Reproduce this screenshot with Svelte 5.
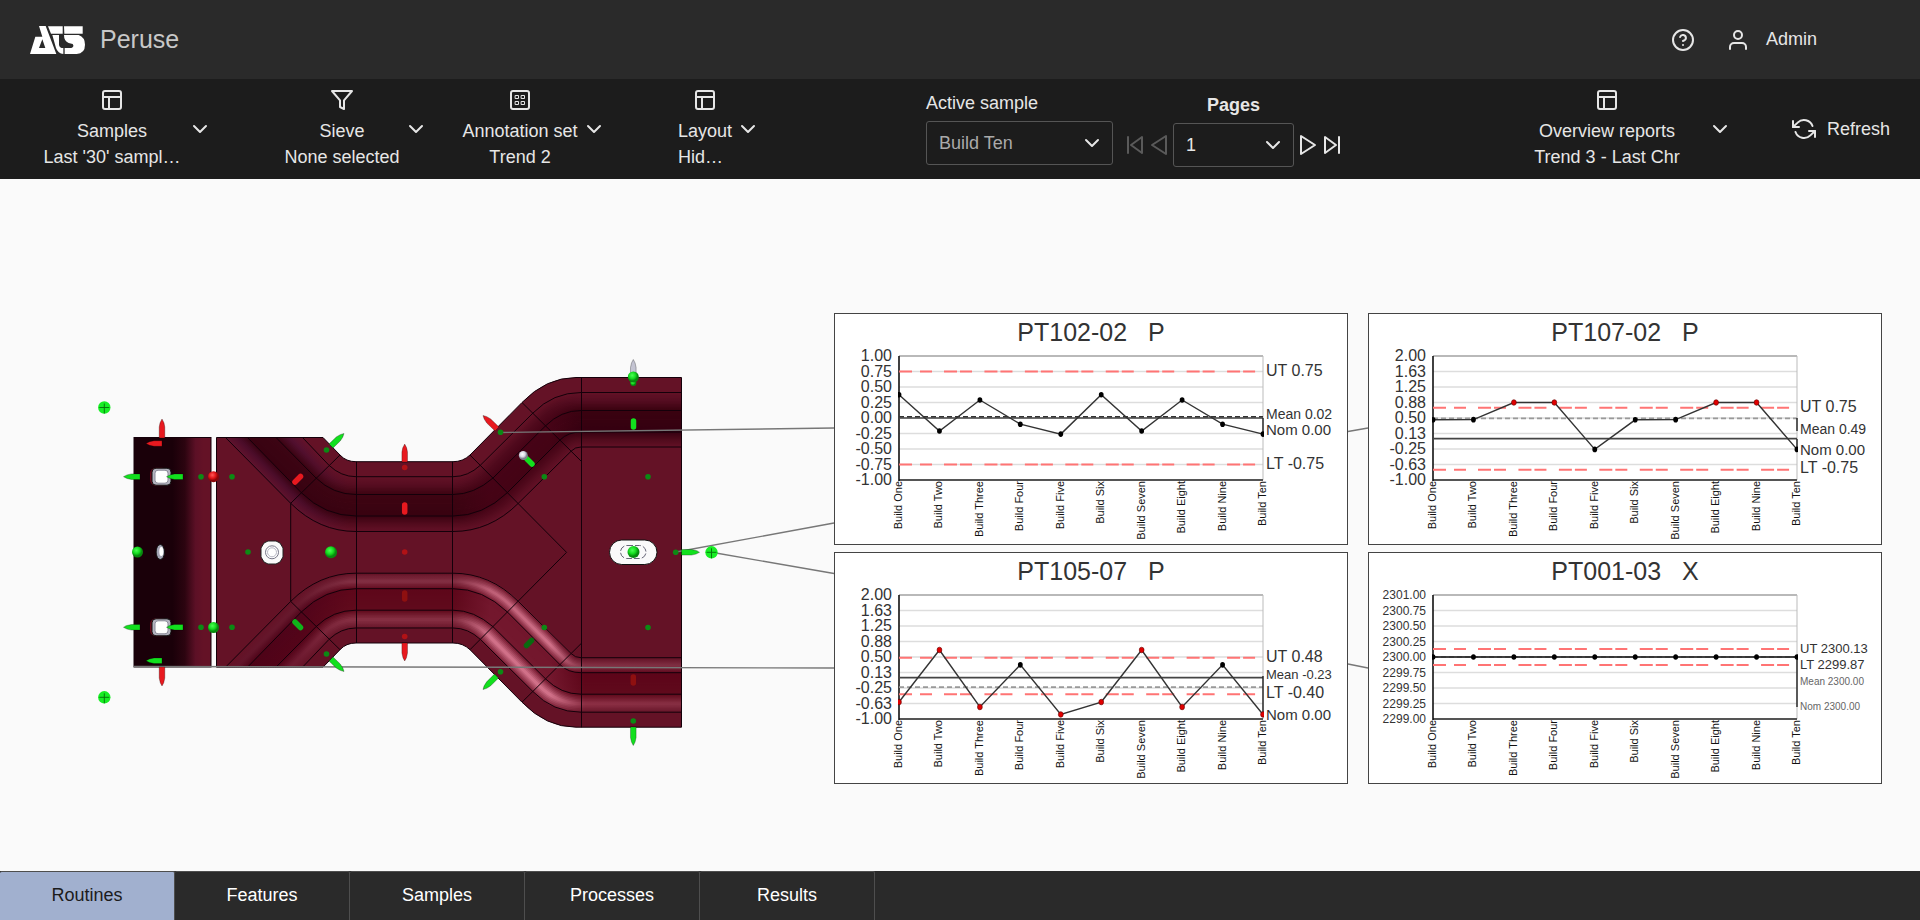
<script lang="ts">
  type Label = { text: string; y: number; size: number; soft?: boolean };
  type Chart = {
    title: string;
    axis: string;
    ticks: string[];
    tickSize: number;
    max: number;
    min: number;
    values: number[];
    ut: number;
    lt: number;
    mean: number;
    nom: number;
    meanDark?: boolean;
    drops: [number, number][];
    labels: Label[];
  };

  const builds = ['One', 'Two', 'Three', 'Four', 'Five', 'Six', 'Seven', 'Eight', 'Nine', 'Ten'];
  const tabs = ['Routines', 'Features', 'Samples', 'Processes', 'Results'];
  let activeTab = 'Routines';

  const wideTicks = ['2.00', '1.63', '1.25', '0.88', '0.50', '0.13', '-0.25', '-0.63', '-1.00'];

  const charts: Chart[] = [
    {
      title: 'PT102-02', axis: 'P', tickSize: 16, max: 1, min: -1,
      ticks: ['1.00', '0.75', '0.50', '0.25', '0.00', '-0.25', '-0.50', '-0.75', '-1.00'],
      values: [0.375, -0.21, 0.29, -0.1, -0.26, 0.375, -0.21, 0.29, -0.1, -0.26],
      ut: 0.75, lt: -0.75, mean: 0.02, nom: 0, meanDark: true,
      drops: [[104, 120]],
      labels: [
        { text: 'UT 0.75', y: 62, size: 16 },
        { text: 'Mean 0.02', y: 105, size: 14 },
        { text: 'Nom 0.00', y: 121, size: 15 },
        { text: 'LT -0.75', y: 155, size: 16 },
      ],
    },
    {
      title: 'PT107-02', axis: 'P', tickSize: 16, max: 2, min: -1,
      ticks: wideTicks,
      values: [0.456, 0.46, 0.875, 0.875, -0.26, 0.456, 0.46, 0.875, 0.875, -0.26],
      ut: 0.75, lt: -0.75, mean: 0.49, nom: 0,
      drops: [[104, 117], [125, 136]],
      labels: [
        { text: 'UT 0.75', y: 98, size: 16 },
        { text: 'Mean 0.49', y: 120, size: 14 },
        { text: 'Nom 0.00', y: 141, size: 15 },
        { text: 'LT -0.75', y: 159, size: 16 },
      ],
    },
    {
      title: 'PT105-07', axis: 'P', tickSize: 16, max: 2, min: -1,
      ticks: wideTicks,
      values: [-0.59, 0.67, -0.71, 0.31, -0.89, -0.59, 0.67, -0.71, 0.31, -0.89],
      ut: 0.48, lt: -0.4, mean: -0.23, nom: 0,
      drops: [[123, 162]],
      labels: [
        { text: 'UT 0.48', y: 109, size: 16 },
        { text: 'Mean -0.23', y: 126, size: 13 },
        { text: 'LT -0.40', y: 145, size: 16 },
        { text: 'Nom 0.00', y: 167, size: 15 },
      ],
    },
    {
      title: 'PT001-03', axis: 'X', tickSize: 12, max: 2301, min: 2299,
      ticks: ['2301.00', '2300.75', '2300.50', '2300.25', '2300.00', '2299.75', '2299.50', '2299.25', '2299.00'],
      values: Array(10).fill(2300),
      ut: 2300.13, lt: 2299.87, mean: 2300, nom: 2300, meanDark: true,
      drops: [[104, 154]],
      labels: [
        { text: 'UT 2300.13', y: 100, size: 13 },
        { text: 'LT 2299.87', y: 116, size: 13 },
        { text: 'Mean 2300.00', y: 132, size: 10, soft: true },
        { text: 'Nom 2300.00', y: 157, size: 10, soft: true },
      ],
    },
  ];

  // plot area inside each chart
  const plot = { left: 64, right: 428, top: 42, height: 124 };
  const step = (plot.right - plot.left) / 9;
  const px = (i: number) => plot.left + i * step;
  const py = (c: Chart, v: number) => plot.top + ((c.max - v) / (c.max - c.min)) * plot.height;
  const isOut = (c: Chart, v: number) => v > c.ut || v < c.lt;

  // The five edges of the pressed channel, outermost first. Every edge has the same nodes.
  const edges = [
    [323, 437.5, 340, 455, 346, 461.7, 356, 461.7, 453, 466, 461.7, 470, 455, 522, 402.5, 545, 377.5, 581, 377.5],
    [302.5, 437.5, 329, 465.3, 341, 476.7, 356, 476.7, 453, 468, 476.7, 480.3, 465.3, 533, 413, 553, 392.5, 581, 392.5],
    [276, 437.5, 316, 478, 333, 494.5, 356, 494.5, 453, 474, 494.5, 493, 478, 545.7, 425.7, 561, 410.5, 581, 410.5],
    [247.5, 437.5, 301.3, 492.7, 325, 516, 356, 516, 453, 483, 516, 507.3, 492.7, 560, 440, 568, 432, 581, 432],
    [225.5, 437.5, 290.7, 503.3, 319, 531.5, 356, 531.5, 453, 490, 531.5, 518.3, 503.3, 571.3, 451, 575, 447, 581, 447],
  ];

  function edgePath(e: number[]) {
    return `M${e[0]} ${e[1]}L${e[2]} ${e[3]}Q${e[4]} ${e[5]} ${e[6]} ${e[7]}H${e[8]}Q${e[9]} ${e[10]} ${e[11]} ${e[12]}L${e[13]} ${e[14]}Q${e[15]} ${e[16]} ${e[17]} ${e[18]}H682`;
  }

  const body =
    'M216.5 437.5H323L340 455Q346 461.7 356 461.7H453Q463 461.7 470 455L522 402.5Q546 377.5 576 377.5H681.5V727.2H576Q546 727.2 522 702.2L470 649.7Q463 643 453 643H356Q346 643 340 649.7L323 667.2H216.5Z';

  // shading keys across the channel, from the outer edge (0) to the inner edge (3)
  const keys = [0, 0.5, 1, 2, 2.5, 3];
  const stops = [235, 300, 350, 455, 490, 550, 585, 681];
  const topShade = [
    ['#641229', '#541030', '#3c0413', '#380211', '#4c0d2a', '#5e122c'],
    ['#641229', '#521030', '#3c0413', '#380211', '#4c0d2a', '#5e122c'],
    ['#641226', '#560d20', '#3e0412', '#380210', '#500a1c', '#621126'],
    ['#641226', '#560d20', '#3e0412', '#380210', '#500a1c', '#621126'],
    ['#641226', '#500a1d', '#460316', '#440315', '#520a1d', '#621126'],
    ['#641226', '#500a1d', '#460316', '#440315', '#520a1d', '#621126'],
    ['#641226', '#540c20', '#3a0210', '#340010', '#4e0a1b', '#621126'],
    ['#641226', '#540c20', '#3a0210', '#340010', '#4e0a1b', '#621126'],
  ];
  const bottomShade = [
    ['#641226', '#66162a', '#500218', '#4c0216', '#62142a', '#641226'],
    ['#641226', '#701c32', '#540419', '#50041a', '#681a2e', '#641226'],
    ['#641226', '#883044', '#600a1c', '#5e061a', '#843044', '#641226'],
    ['#681428', '#883044', '#600a1c', '#5e061a', '#843044', '#681428'],
    ['#74182e', '#d87890', '#74182e', '#72162c', '#c4647c', '#70182c'],
    ['#74182e', '#d87890', '#74182e', '#72162c', '#d87890', '#74182e'],
    ['#641226', '#8e3046', '#600a1c', '#5c0418', '#843044', '#641226'],
    ['#641226', '#883044', '#600a1c', '#5c0418', '#803044', '#641226'],
  ];

  const channel = (hex: string, n: number) => parseInt(hex.slice(1 + n * 2, 3 + n * 2), 16);

  function shadeAt(row: string[], t: number) {
    let k = 0;
    while (k < keys.length - 2 && t > keys[k + 1]) k++;
    const f = (t - keys[k]) / (keys[k + 1] - keys[k]);
    const rgb = [0, 1, 2].map((n) =>
      Math.round(channel(row[k], n) * (1 - f) + channel(row[k + 1], n) * f)
    );
    return `rgb(${rgb.join(',')})`;
  }

  const strips = Array.from({ length: 36 }, (_, i) => {
    const t = (i + 0.5) / 12;
    const lower = Math.floor(t) + 1;
    const f = t - Math.floor(t);
    return { t, d: edgePath(edges[lower].map((n, j) => n * (1 - f) + edges[lower + 1][j] * f)) };
  });

  const halves = [
    { name: 'top', shade: topShade, transform: '' },
    { name: 'bottom', shade: bottomShade, transform: 'translate(0 1104.7) scale(1 -1)' },
  ];

  const green = '#12e01e';
  const red = '#e8191f';

  // from the base to the tip
  const cones = [
    { x1: 162, y1: 438, x2: 162, y2: 419, fill: red },
    { x1: 162, y1: 443.5, x2: 146, y2: 443.5, fill: red },
    { x1: 162, y1: 667, x2: 162, y2: 686, fill: red },
    { x1: 162, y1: 660.7, x2: 146, y2: 660.7, fill: green },
    { x1: 140, y1: 476.7, x2: 123.5, y2: 476.7, fill: green },
    { x1: 183, y1: 476.7, x2: 166.5, y2: 476.7, fill: green },
    { x1: 140, y1: 627.3, x2: 123.5, y2: 627.3, fill: green },
    { x1: 183, y1: 627.3, x2: 166.5, y2: 627.3, fill: green },
    { x1: 331, y1: 446, x2: 344, y2: 433.5, fill: green },
    { x1: 331, y1: 659, x2: 344, y2: 671.5, fill: green },
    { x1: 404.7, y1: 462, x2: 404.7, y2: 444, fill: red },
    { x1: 404.7, y1: 643, x2: 404.7, y2: 661, fill: red },
    { x1: 497, y1: 429, x2: 483, y2: 415.5, fill: red },
    { x1: 496.5, y1: 676, x2: 483, y2: 689.5, fill: green },
    { x1: 633.3, y1: 376, x2: 633.3, y2: 359.5, fill: '#c4c4d2' },
    { x1: 633.3, y1: 727, x2: 633.3, y2: 745.5, fill: green },
    { x1: 681.5, y1: 552.3, x2: 699.5, y2: 552.3, fill: green },
  ];

  const studs = [
    { x1: 300.5, y1: 476.5, x2: 295, y2: 482, fill: red },
    { x1: 404.7, y1: 505, x2: 404.7, y2: 512, fill: red },
    { x1: 404.7, y1: 593, x2: 404.7, y2: 599, fill: '#8e1010' },
    { x1: 295, y1: 622, x2: 300.5, y2: 627.5, fill: '#0fb41a' },
    { x1: 527, y1: 459, x2: 532, y2: 464, fill: green },
    { x1: 633.5, y1: 421, x2: 633.5, y2: 427, fill: green },
    { x1: 526.5, y1: 645.5, x2: 531.5, y2: 640.5, fill: '#0a6a10' },
    { x1: 633.3, y1: 677, x2: 633.3, y2: 683, fill: '#8e1010' },
  ];

  const balls = [
    { x: 137.5, y: 552, r: 5.5, kind: 'green' },
    { x: 213.5, y: 476.7, r: 5.5, kind: 'red' },
    { x: 213.5, y: 627.5, r: 5.5, kind: 'green' },
    { x: 331, y: 552.3, r: 6, kind: 'green' },
    { x: 633.5, y: 552, r: 6, kind: 'green' },
    { x: 633.3, y: 383, r: 3, kind: 'green' },
    { x: 633.3, y: 377, r: 5.5, kind: 'green' },
    { x: 523.3, y: 455.5, r: 4.5, kind: 'white' },
  ];

  const dots = [
    [201, 476.7], [232, 476.7], [201, 627.3], [232, 627.3], [248, 552], [326.5, 450], [326.5, 654],
    [500.5, 432.3], [500.5, 671.7], [544.3, 476.7], [544.3, 627.5], [648, 476.7], [648, 627.5],
    [633.3, 721], [675.7, 552.3],
  ];
  const redDots = [[404.7, 467.5], [404.7, 552], [404.7, 636.5]];
  const targets = [[104.3, 407.5], [104.3, 697.3], [711.5, 552.3]];

  function cone(c: { x1: number; y1: number; x2: number; y2: number }) {
    const len = Math.hypot(c.x2 - c.x1, c.y2 - c.y1);
    return `M0 -2.8H${len - 8}Q${len - 3} -2.2 ${len} 0Q${len - 3} 2.2 ${len - 8} 2.8H0Z`;
  }
  const turn = (c: { x1: number; y1: number; x2: number; y2: number }) =>
    (Math.atan2(c.y2 - c.y1, c.x2 - c.x1) * 180) / Math.PI;
</script>

{#snippet chevron()}
  <svg class="icon chevron" viewBox="0 0 24 24" aria-hidden="true"><path d="M6 9l6 6 6-6" /></svg>
{/snippet}

{#snippet layoutIcon()}
  <svg class="icon" viewBox="0 0 24 24" aria-hidden="true">
    <rect x="3" y="3" width="18" height="18" rx="2" />
    <path d="M3 9h18M9 21V9" />
  </svg>
{/snippet}

<div class="app">
  <header class="header">
    <div class="brand">
      <svg class="logo" viewBox="0 0 165 84" role="img" aria-label="ATS">
        <path fill-rule="evenodd" d="M27 0H47L79 84H0L16 32H37ZM37 40L27 66H46Z" />
        <path d="M54 1H98V23H63Z" />
        <path d="M67 27H87V56Q88 66 100 66V84Q84 83 78 66Z" />
        <path d="M102 1H158V23H103Z" />
        <path d="M102 27H146Q165 34 165 56Q165 82 140 84H104V66H124Q134 62 128 54L116 51Q102 46 102 27Z" />
      </svg>
      <span class="product">Peruse</span>
    </div>
    <div class="account">
      <button class="plain" aria-label="Help">
        <svg class="icon" viewBox="0 0 24 24" aria-hidden="true">
          <circle cx="12" cy="12" r="10" />
          <path d="M9.09 9a3 3 0 0 1 5.83 1c0 2-3 3-3 3M12 17h.01" />
        </svg>
      </button>
      <button class="plain user">
        <svg class="icon" viewBox="0 0 24 24" aria-hidden="true">
          <path d="M20 21v-2a4 4 0 0 0-4-4H8a4 4 0 0 0-4 4v2" />
          <circle cx="12" cy="7" r="4" />
        </svg>
        Admin
      </button>
    </div>
  </header>

  <nav class="toolbar">
    <button class="menu samples">
      <span class="menu-text">
        {@render layoutIcon()}
        <span>Samples</span>
        <span>Last '30' sampl…</span>
      </span>
      {@render chevron()}
    </button>
    <button class="menu">
      <span class="menu-text">
        <svg class="icon" viewBox="0 0 24 24" aria-hidden="true">
          <path d="M22 3H2l8 9.46V19l4 2v-8.54z" />
        </svg>
        <span>Sieve</span>
        <span>None selected</span>
      </span>
      {@render chevron()}
    </button>
    <button class="menu">
      <span class="menu-text">
        <svg class="icon" viewBox="0 0 24 24" aria-hidden="true">
          <rect x="3" y="3" width="18" height="18" rx="2" />
          <path class="thin" d="M7.5 7.5h3v3h-3zM13.5 7.5h3v3h-3zM7.5 13.5h3v3h-3zM13.5 13.5h3v3h-3z" />
        </svg>
        <span>Annotation set</span>
        <span>Trend 2</span>
      </span>
      {@render chevron()}
    </button>
    <button class="menu layout">
      <span class="menu-text">
        {@render layoutIcon()}
        <span>Layout</span>
        <span class="start">Hid…</span>
      </span>
      {@render chevron()}
    </button>

    <div class="picker">
      <div class="field sample">
        <label for="sample">Active sample</label>
        <div class="select">
          <select id="sample">
            <option>Build Ten</option>
          </select>
          {@render chevron()}
        </div>
      </div>
      <div class="pager">
        <button class="plain" aria-label="First page" disabled>
          <svg class="icon step" viewBox="0 0 20 24" aria-hidden="true"><path d="M3 4v16M17 4v16L6 12z" /></svg>
        </button>
        <button class="plain" aria-label="Previous page" disabled>
          <svg class="icon step" viewBox="0 0 20 24" aria-hidden="true"><path d="M17 3v18L3 12z" /></svg>
        </button>
        <div class="field page">
          <label for="page">Pages</label>
          <div class="select">
            <select id="page">
              <option>1</option>
            </select>
            {@render chevron()}
          </div>
        </div>
        <button class="plain" aria-label="Next page">
          <svg class="icon step" viewBox="0 0 20 24" aria-hidden="true"><path d="M3 3v18l14-9z" /></svg>
        </button>
        <button class="plain" aria-label="Last page">
          <svg class="icon step" viewBox="0 0 20 24" aria-hidden="true"><path d="M17 4v16M3 4v16l11-8z" /></svg>
        </button>
      </div>
    </div>

    <div class="reports">
      <button class="menu overview">
        <span class="menu-text">
          {@render layoutIcon()}
          <span>Overview reports</span>
          <span>Trend 3 - Last Chr</span>
        </span>
        {@render chevron()}
      </button>
      <button class="plain refresh">
        <svg class="icon" viewBox="0 0 24 24" aria-hidden="true">
          <path d="M1 4v6h6M23 20v-6h-6" />
          <path d="M20.49 9A9 9 0 0 0 5.64 5.64L1 10m22 4l-4.64 4.36A9 9 0 0 1 3.51 15" />
        </svg>
        Refresh
      </button>
    </div>
  </nav>

  <main class="stage">
    <svg class="scene" viewBox="0 179 1882 660" role="img" aria-label="Part with measured features">
      <defs>
        <linearGradient id="flange">
          <stop offset="0.5" stop-color="#1a0009" />
          <stop offset="0.66" stop-color="#2c0410" />
          <stop offset="0.8" stop-color="#5c1026" />
          <stop offset="0.9" stop-color="#641226" />
        </linearGradient>
        <radialGradient id="ball-green" cx="0.4" cy="0.35">
          <stop offset="0" stop-color="#4dff55" />
          <stop offset="0.6" stop-color="#16dc20" />
          <stop offset="1" stop-color="#078a0e" />
        </radialGradient>
        <radialGradient id="ball-red" cx="0.4" cy="0.35">
          <stop offset="0" stop-color="#ff5a5a" />
          <stop offset="0.6" stop-color="#e01418" />
          <stop offset="1" stop-color="#8a0508" />
        </radialGradient>
        <radialGradient id="ball-white" cx="0.4" cy="0.35">
          <stop offset="0" stop-color="#ffffff" />
          <stop offset="0.6" stop-color="#d8d8e4" />
          <stop offset="1" stop-color="#80808e" />
        </radialGradient>
        <clipPath id="body-clip"><path d={body} /></clipPath>
        {#each halves as half}
          {#each strips as strip, i}
            <linearGradient id="{half.name}-{i}" gradientUnits="userSpaceOnUse" x1="216" y1="0" x2="682" y2="0">
              {#each stops as x, s}
                <stop offset={(x - 216) / 466} stop-color={shadeAt(half.shade[s], strip.t)} />
              {/each}
            </linearGradient>
          {/each}
        {/each}
      </defs>

      <rect x="134" y="437.5" width="77" height="229.5" fill="url(#flange)" stroke="#14000a" />
      <path d={body} fill="#641226" />
      <g clip-path="url(#body-clip)">
        {#each halves as half}
          <g transform={half.transform} fill="none">
            {#each strips as strip, i}
              <path d={strip.d} stroke="url(#{half.name}-{i})" stroke-width="2.4" />
            {/each}
            {#each edges.slice(1) as edge}
              <path class="edge" d={edgePath(edge)} />
            {/each}
            <path class="edge" d="M340 455L290.7 503.3V552.3M470 455L566.5 552.3M522 402.5L581 461" />
          </g>
        {/each}
        <path class="edge" d="M356.5 461V643M452.5 461V643M581.5 377V728" />
      </g>
      <path class="edge" fill="none" d={body} />

      <!-- holes and fasteners -->
      {#each [476.7, 627.3] as y}
        <rect x="150" y={y - 9} width="18" height="18" rx="6" fill="#6a0a1c" />
        <rect x="152" y={y - 8.5} width="19" height="17" rx="4" fill="#b4b4c0" stroke="#111" />
        <rect x="155" y={y - 6.5} width="13" height="13" rx="3" fill="#fff" stroke="#8a8a98" />
      {/each}
      <ellipse cx="160.3" cy="552" rx="4.2" ry="7.5" fill="#a4a4b4" stroke="#111" />
      <ellipse cx="161.3" cy="551.5" rx="2" ry="4.5" fill="#fff" />
      <path d="M268 541h8l4 2 3 5v9l-3 5-4 2h-8l-4-2-3-5v-9l3-5z" fill="#fafafa" stroke="#222" />
      <circle cx="272" cy="552.3" r="6.5" fill="#fff" stroke="#777788" />
      <circle cx="272" cy="552.3" r="4.5" fill="none" stroke="#b8b8c4" />
      <rect x="609.5" y="540" width="47.5" height="24.5" rx="12.2" fill="#fafafa" stroke="#111" />
      <rect x="620.5" y="545.5" width="25.5" height="13" rx="6.5" fill="none" stroke="#667" stroke-dasharray="6 2" />

      <!-- leader lines to the charts -->
      <path
        class="leader"
        d="M500.5 432.5L834 428M676 552L834 523M711.5 552.3L834 573.5M134 666.5L834 668M1348 431.5L1368 428M1348 664L1368 668"
      />

      {#each cones as c}
        <path d={cone(c)} fill={c.fill} stroke="#000" stroke-opacity="0.35" stroke-width="0.8" transform="translate({c.x1} {c.y1}) rotate({turn(c)})" />
      {/each}
      {#each studs as s}
        <line x1={s.x1} y1={s.y1} x2={s.x2} y2={s.y2} stroke={s.fill} stroke-width="5.5" stroke-linecap="round" />
      {/each}
      {#each balls as b}
        <circle cx={b.x} cy={b.y} r={b.r} fill="url(#ball-{b.kind})" />
      {/each}
      {#each dots as [x, y]}
        <circle cx={x} cy={y} r="2.8" fill="#0c8a14" />
      {/each}
      {#each redDots as [x, y]}
        <circle cx={x} cy={y} r="2.8" fill="#b01216" />
      {/each}
      {#each targets as [x, y]}
        <circle cx={x} cy={y} r="6.2" fill="#17ee24" />
        <path d="M{x - 5} {y}h10M{x} {y - 4}v10" stroke="#067a0c" />
      {/each}
    </svg>

    <div class="charts">
      {#each charts as chart, n}
        <section class="card">
          <svg class="chart" viewBox="0 0 512 230" role="img" aria-label={chart.title}>
            <defs>
              <clipPath id="plot-{n}">
                <rect x={plot.left - 1} y={plot.top} width={plot.right - plot.left + 2} height={plot.height} />
              </clipPath>
            </defs>
            <text class="title" x="256" y="27">{chart.title}   {chart.axis}</text>

            {#each chart.ticks as tick, i}
              <text class="tick" x="57" y={plot.top + i * 15.5 + (chart.tickSize > 12 ? 5 : 4)} font-size={chart.tickSize}>{tick}</text>
              <line class="grid" x1={plot.left} x2={plot.right} y1={plot.top + i * 15.5} y2={plot.top + i * 15.5} />
            {/each}
            <path d="M{plot.left} {plot.top}H{plot.right}" stroke="#aaa" stroke-width="1.5" />
            <path d="M{plot.right} {plot.top}v{plot.height}" stroke="#bbb" />
            <path d="M{plot.left} {plot.top + plot.height}H{plot.right}" stroke="#555" stroke-width="2" />
            <path d="M{plot.left} {plot.top}v{plot.height + 1}" stroke="#111" stroke-width="1.6" />

            {#each [chart.ut, chart.lt] as limit}
              <path class="limit" stroke-dasharray="13 8 12 99" d="M{plot.left} {py(chart, limit)}h{step}" />
              <path class="limit" stroke-dasharray="13 3 12 12.44" d="M{plot.left + 45} {py(chart, limit)}H{plot.right}" />
            {/each}
            <path d="M{plot.left} {py(chart, chart.nom)}H{plot.right}" stroke="#444" stroke-width="1.6" />
            <path
              d="M{plot.left} {py(chart, chart.mean)}H{plot.right}"
              stroke={chart.meanDark ? '#333' : '#999'}
              stroke-width="1.6"
              stroke-dasharray="5 3"
            />
            {#each chart.drops as [from, to]}
              <path d="M{plot.right} {from}V{to}" stroke="#222" stroke-width="1.4" />
            {/each}

            <g clip-path="url(#plot-{n})">
              <polyline class="trend" points={chart.values.map((v, i) => `${px(i)},${py(chart, v)}`).join(' ')} />
              {#each chart.values as v, i}
                <ellipse cx={px(i)} cy={py(chart, v)} rx="2.4" ry="2.8" class:out={isOut(chart, v)} />
              {/each}
            </g>

            {#each chart.labels as label}
              <text class="note" class:soft={label.soft} x="431" y={label.y} font-size={label.size}>{label.text}</text>
            {/each}
            {#each builds as build, i}
              <text class="build" transform="translate({px(i) + 3} 167) rotate(-90)">Build {build}</text>
            {/each}
          </svg>
        </section>
      {/each}
    </div>
  </main>

  <footer class="tabs">
    {#each tabs as tab}
      <button class="tab" class:active={tab === activeTab} on:click={() => (activeTab = tab)}>{tab}</button>
    {/each}
  </footer>
</div>

<style>
  :global(body) {
    margin: 0;
    background: #fafafa;
  }
  .app {
    display: flex;
    flex-direction: column;
    min-height: 100vh;
    font-family: 'Liberation Sans', Arial, sans-serif;
    font-size: 18px;
    color: #e6e6e6;
  }
  button,
  select {
    font: inherit;
    color: inherit;
    background: none;
    border: 0;
    margin: 0;
    padding: 0;
    cursor: pointer;
  }
  .icon {
    display: block;
    flex: none;
    width: 24px;
    height: 24px;
    fill: none;
    stroke: #e6e6e6;
    stroke-width: 2;
    stroke-linecap: round;
    stroke-linejoin: round;
  }
  .thin {
    stroke-width: 1;
    stroke-linejoin: miter;
  }

  .header {
    display: flex;
    align-items: center;
    justify-content: space-between;
    height: 79px;
    padding: 0 103px 0 30px;
    background: #2a2a2a;
  }
  .brand {
    display: flex;
    align-items: center;
    gap: 15px;
  }
  .logo {
    width: 55px;
    height: 28px;
    fill: #fff;
  }
  .product {
    font-size: 25px;
    color: #c8c8c8;
  }
  .account {
    display: flex;
    align-items: center;
    gap: 31px;
  }
  .plain {
    display: flex;
    align-items: center;
  }
  .user {
    gap: 16px;
  }

  .toolbar {
    display: grid;
    grid-template-columns: 252fr 208fr 148fr 222fr 608fr 482fr;
    align-items: center;
    height: 100px;
    background: #1c1c1c;
  }
  .menu {
    display: flex;
    align-items: center;
    justify-content: center;
    gap: 4px;
    white-space: nowrap;
  }
  .menu-text {
    display: flex;
    flex-direction: column;
    align-items: center;
    line-height: 26px;
  }
  .menu-text .icon {
    margin-bottom: 6px;
  }
  .samples .menu-text {
    min-width: 144px;
  }
  .overview .menu-text {
    min-width: 194px;
  }
  .start {
    align-self: flex-start;
  }

  .picker {
    display: flex;
    justify-content: center;
    gap: 12px;
    padding-top: 2px;
  }
  .field {
    display: flex;
    flex-direction: column;
    gap: 8px;
    line-height: 20px;
  }
  .select {
    display: grid;
    align-items: center;
    justify-items: end;
  }
  .select select {
    grid-area: 1 / 1;
    width: 100%;
    height: 44px;
    padding: 0 12px;
    border: 1px solid #555;
    border-radius: 3px;
    appearance: none;
  }
  .select .icon {
    grid-area: 1 / 1;
    margin-right: 9px;
    pointer-events: none;
  }
  .sample {
    width: 187px;
  }
  .sample select {
    color: #aaa;
  }
  .page {
    width: 121px;
    margin-top: 2px;
  }
  .page label {
    font-weight: bold;
    text-align: center;
  }
  .pager {
    display: flex;
    align-items: flex-end;
    gap: 4px;
  }
  .pager > .plain {
    height: 44px;
  }
  .step {
    width: 20px;
    stroke-width: 2;
  }
  .plain:disabled .icon {
    stroke: #5a5a5a;
  }

  .reports {
    display: flex;
    align-items: center;
    justify-content: flex-end;
    gap: 60px;
    padding-right: 30px;
  }
  .refresh {
    gap: 11px;
  }

  .stage {
    flex: 1;
    display: grid;
    grid-template-columns: 834fr 1048fr;
    align-items: start;
    padding-right: 38px;
    background: #fafafa;
  }
  .scene {
    grid-area: 1 / 1 / 2 / 3;
    display: block;
    width: 100%;
  }
  .edge {
    stroke: #14000a;
    stroke-width: 1;
  }
  .leader {
    fill: none;
    stroke: #777;
    stroke-width: 1.4;
  }
  .charts {
    grid-area: 1 / 2;
    display: grid;
    grid-template-columns: 1fr 1fr;
    gap: 7px 20px;
    padding-top: 134px;
  }
  .card {
    border: 1px solid #444;
    background: #fff;
  }
  .chart {
    display: block;
    width: 100%;
    fill: none;
  }
  .chart text {
    fill: #333;
  }
  .title {
    font-size: 25px;
    text-anchor: middle;
    white-space: pre;
  }
  .tick {
    text-anchor: end;
  }
  .chart .soft {
    fill: #666;
  }
  .chart .build {
    font-size: 11px;
    text-anchor: end;
    fill: #111;
  }
  .grid {
    stroke: #ddd;
    stroke-width: 1.5;
  }
  .limit {
    stroke: #ff7474;
    stroke-width: 2;
  }
  .trend {
    stroke: #333;
    stroke-width: 1.4;
  }
  .chart ellipse {
    fill: #000;
  }
  .chart ellipse.out {
    fill: #e00000;
    stroke: #600;
    stroke-width: 0.6;
  }

  .tabs {
    display: flex;
    height: 49px;
    background: #2a2a2a;
  }
  .tab {
    width: 175px;
    padding-bottom: 2px;
    border: 1px solid #4e4e4e;
    border-width: 1px 1px 0 0;
    border-radius: 2px 2px 0 0;
    color: #fff;
  }
  .tab.active {
    background: #a1b0cf;
    color: #1c1c1c;
  }
</style>
